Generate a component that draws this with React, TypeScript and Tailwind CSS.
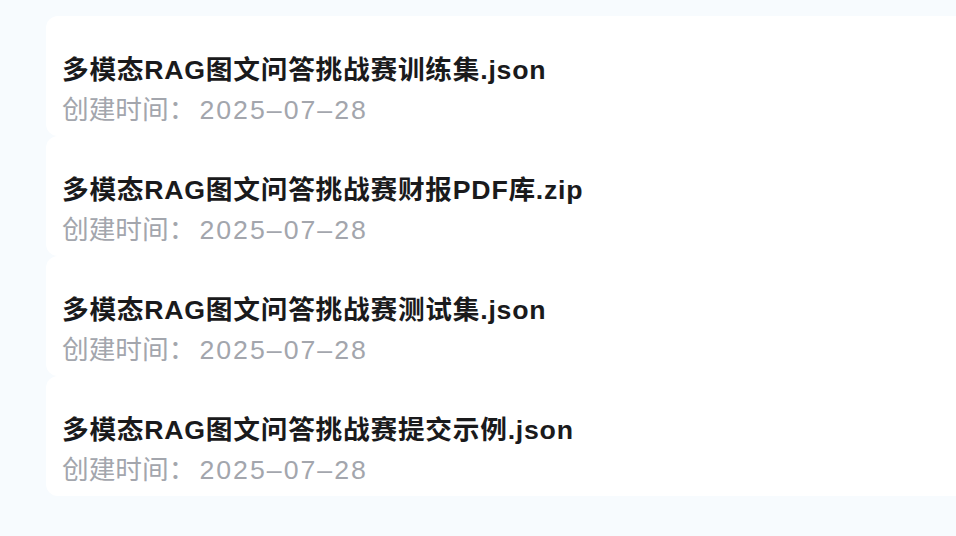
const FILES = [
  "多模态RAG图文问答挑战赛训练集.json",
  "多模态RAG图文问答挑战赛财报PDF库.zip",
  "多模态RAG图文问答挑战赛测试集.json",
  "多模态RAG图文问答挑战赛提交示例.json"
];

export default function App() {
  return (
    <div
      className="min-h-[536px] w-[956px] overflow-hidden bg-[#f7fbfe] pt-[16px] pl-[46px]"
      style={{ fontFamily: '"Liberation Sans", "Noto Sans CJK SC", sans-serif' }}
    >
      <div className="flex flex-col">
        {FILES.map((name) => (
          <div key={name} className="h-[120px] w-[930px] rounded-[12px] bg-white pl-[16px] pt-[34px]">
            <div className="text-[26.7px] font-semibold leading-[40px] tracking-[0.75px] text-[#1a1a1c]">
              {name}
            </div>
            <div className="text-[26.7px] leading-[40px] text-[#a3a6ad]">
              创建时间：<span className="ml-[4px] tracking-[2px]">2025–07–28</span>
            </div>
          </div>
        ))}
      </div>
    </div>
  );
}
